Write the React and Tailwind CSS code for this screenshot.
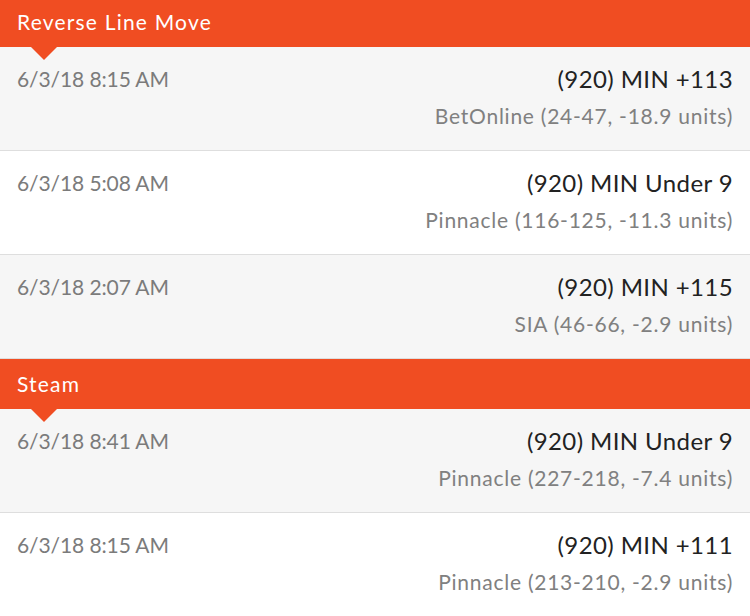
const sections = [
  {
    title: "Reverse Line Move",
    first: true,
    rows: [
      { date: "6/3/18 8:15 AM", bet: "(920) MIN +113", book: "BetOnline (24-47, -18.9 units)" },
      { date: "6/3/18 5:08 AM", bet: "(920) MIN Under 9", book: "Pinnacle (116-125, -11.3 units)" },
      { date: "6/3/18 2:07 AM", bet: "(920) MIN +115", book: "SIA (46-66, -2.9 units)" },
    ],
  },
  {
    title: "Steam",
    rows: [
      { date: "6/3/18 8:41 AM", bet: "(920) MIN Under 9", book: "Pinnacle (227-218, -7.4 units)" },
      { date: "6/3/18 8:15 AM", bet: "(920) MIN +111", book: "Pinnacle (213-210, -2.9 units)" },
    ],
  },
];

function Header({ title, first }) {
  return (
    <div className={`relative bg-[#f04d22] px-[17px] flex items-center ${first ? "h-[47px]" : "h-[50px]"}`}>
      <span className={`text-white text-[21px] tracking-[1.2px] ${first ? "-mt-[4px]" : ""}`}>{title}</span>
      <div className="absolute left-[31px] top-full w-0 h-0 border-l-[13px] border-r-[13px] border-t-[13px] border-l-transparent border-r-transparent border-t-[#f04d22] z-10"></div>
    </div>
  );
}

function Row({ row, index }) {
  return (
    <div className={`h-[104px] border-b border-[#dedede] px-[17px] pt-[16px] flex justify-between ${index % 2 === 0 ? "bg-[#f6f6f6]" : "bg-white"}`}>
      <div className="text-[21px] tracking-[-0.1px] text-[#7b7b7b] leading-[32px]">{row.date}</div>
      <div className="flex flex-col items-end">
        <div className="text-[24px] tracking-[0.4px] text-[#222] leading-[32px]">{row.bet}</div>
        <div className="text-[21px] tracking-[0.75px] text-[#808080] leading-[26px] mt-[8px]">{row.book}</div>
      </div>
    </div>
  );
}

export default function App() {
  return (
    <div className="w-[750px] h-[616px] overflow-hidden bg-white" style={{ fontFamily: "Lato, 'Open Sans', sans-serif" }}>
      {sections.map((s) => (
        <div key={s.title}>
          <Header title={s.title} first={s.first} />
          {s.rows.map((r, i) => (
            <Row key={i} row={r} index={i} />
          ))}
        </div>
      ))}
    </div>
  );
}
